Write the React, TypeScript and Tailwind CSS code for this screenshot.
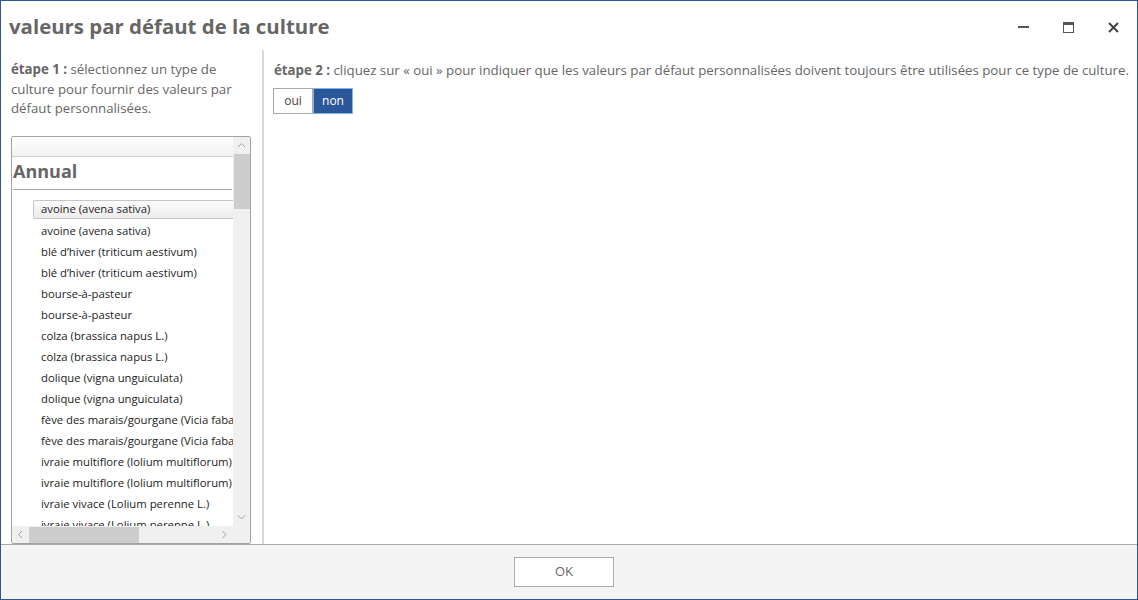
import React from 'react';

const CROPS = [
  'avoine (avena sativa)',
  'avoine (avena sativa)',
  'blé d’hiver (triticum aestivum)',
  'blé d’hiver (triticum aestivum)',
  'bourse-à-pasteur',
  'bourse-à-pasteur',
  'colza (brassica napus L.)',
  'colza (brassica napus L.)',
  'dolique (vigna unguiculata)',
  'dolique (vigna unguiculata)',
  'fève des marais/gourgane (Vicia faba)',
  'fève des marais/gourgane (Vicia faba)',
  'ivraie multiflore (lolium multiflorum)',
  'ivraie multiflore (lolium multiflorum)',
  'ivraie vivace (Lolium perenne L.)',
  'ivraie vivace (Lolium perenne L.)',
  'lin (linum usitatissimum)',
];

const font = { fontFamily: '"Open Sans", "Noto Sans", sans-serif' };

const Chevron = ({ dir }: { dir: 'up' | 'down' | 'left' | 'right' }) => {
  const d = {
    up: 'M1 5 L4.5 1.5 L8 5',
    down: 'M1 1.5 L4.5 5 L8 1.5',
    left: 'M5 1 L1.5 4.5 L5 8',
    right: 'M1.5 1 L5 4.5 L1.5 8',
  }[dir];
  const vertical = dir === 'up' || dir === 'down';
  return (
    <svg
      width={vertical ? 9 : 7}
      height={vertical ? 7 : 9}
      viewBox={vertical ? '0 0 9 7' : '0 0 7 9'}
      fill="none"
      stroke="#a0a0a0"
      strokeWidth="1"
    >
      <path d={d} />
    </svg>
  );
};

const CropList = () => (
  <div className="flex-1 min-h-0 mt-[17px] border border-[#a3a3a3] rounded-[2px] grid grid-cols-[1fr_17px] grid-rows-[1fr_17px] overflow-hidden">
    <div className="overflow-hidden min-w-0">
      <div className="h-[20px] bg-gradient-to-b from-white to-[#f1f1f1] border-b border-[#d0d0d0]"></div>
      <div className="mx-[1px] border-b border-[#a8a8a8] h-[33px] flex items-center pb-[4px]">
        <span className="text-[18px] font-bold text-[#666] leading-none">Annual</span>
      </div>
      <div className="pl-[21px] pt-[10px] whitespace-nowrap">
        {CROPS.map((c, i) => (
          <div
            key={i}
            className={
              i === 0
                ? 'h-[19px] mb-[2px] pl-[7px] flex items-center text-[11.3px] text-[#222] border border-[#c6c6c6] rounded-[2px] bg-gradient-to-b from-[#fbfbfb] to-[#ececec] w-[240px]'
                : 'h-[19px] mb-[2px] pl-[8px] pt-[2px] flex items-center text-[11.3px] text-[#222]'
            }
          >
            {c}
          </div>
        ))}
      </div>
    </div>
    <div className="bg-[#f0f0f0] flex flex-col items-center">
      <div className="h-[17px] flex items-center justify-center">
        <Chevron dir="up" />
      </div>
      <div className="h-[55px] w-[16px] bg-[#cdcdcd]"></div>
      <div className="flex-1"></div>
      <div className="h-[17px] flex items-center justify-center">
        <Chevron dir="down" />
      </div>
    </div>
    <div className="bg-[#f0f0f0] flex items-center">
      <div className="w-[17px] flex justify-center">
        <Chevron dir="left" />
      </div>
      <div className="h-[16px] w-[110px] bg-[#cdcdcd]"></div>
      <div className="flex-1"></div>
      <div className="w-[17px] flex justify-center">
        <Chevron dir="right" />
      </div>
    </div>
    <div className="bg-[#f0f0f0]"></div>
  </div>
);

export default function App() {
  return (
    <div
      className="w-[1138px] h-[600px] border border-[#2b579a] bg-white flex flex-col relative overflow-hidden"
      style={font}
    >
      <div className="absolute top-[-1px] left-[550px] w-[37px] h-[1px] bg-[#333]"></div>
      <header className="h-[49px] shrink-0 flex items-center pl-[8px] pr-[18px] pt-[3px]">
        <h1 className="text-[20.4px] font-bold text-[#666] flex-1 pb-[2px]">
          valeurs par défaut de la culture
        </h1>
        <div className="flex items-center gap-[34px] text-[#444]">
          <div className="w-[11px] h-[11px] flex items-center">
            <div className="w-[11px] h-[2px] bg-[#555]"></div>
          </div>
          <div className="w-[11px] h-[11px] border border-[#555] border-t-[3px]"></div>
          <svg width="11" height="11" viewBox="0 0 11 11" stroke="#444" strokeWidth="2">
            <path d="M1 1 L10 10 M10 1 L1 10" />
          </svg>
        </div>
      </header>
      <main className="flex-1 min-h-0 flex">
        <section className="w-[261px] shrink-0 flex flex-col pl-[10px] pr-[11px] pt-[10px]">
          <p className="text-[13.25px] leading-[19.5px] text-[#666]">
            <span className="font-bold">étape 1 :</span> sélectionnez un type de culture pour fournir des valeurs par défaut personnalisées.
          </p>
          <CropList />
        </section>
        <div className="w-[2px] bg-[#d8d8d8] shrink-0"></div>
        <section className="flex-1 pl-[10px] pt-[11px]">
          <p className="text-[13.25px] leading-[19px] text-[#666] whitespace-nowrap">
            <span className="font-bold">étape 2 :</span> cliquez sur « oui » pour indiquer que les valeurs par défaut personnalisées doivent toujours être utilisées pour ce type de culture.
          </p>
          <div className="flex mt-[8px] -ml-[1px]">
            <button className="w-[40px] h-[26px] border border-[#a9a9a9] bg-white text-[12px] text-[#444]">
              oui
            </button>
            <button className="w-[40px] h-[26px] border border-[#7eb4ea] bg-[#2b579a] text-[12px] text-white outline outline-1 outline-[#2b579a] outline-offset-[-3px]">
              non
            </button>
          </div>
        </section>
      </main>
      <footer className="h-[55px] shrink-0 border-t border-[#ababab] bg-[#f4f4f4] flex items-center justify-center">
        <button className="w-[100px] h-[30px] border border-[#ababab] bg-white text-[13px] text-[#666] mr-[10px]">
          OK
        </button>
      </footer>
    </div>
  );
}
